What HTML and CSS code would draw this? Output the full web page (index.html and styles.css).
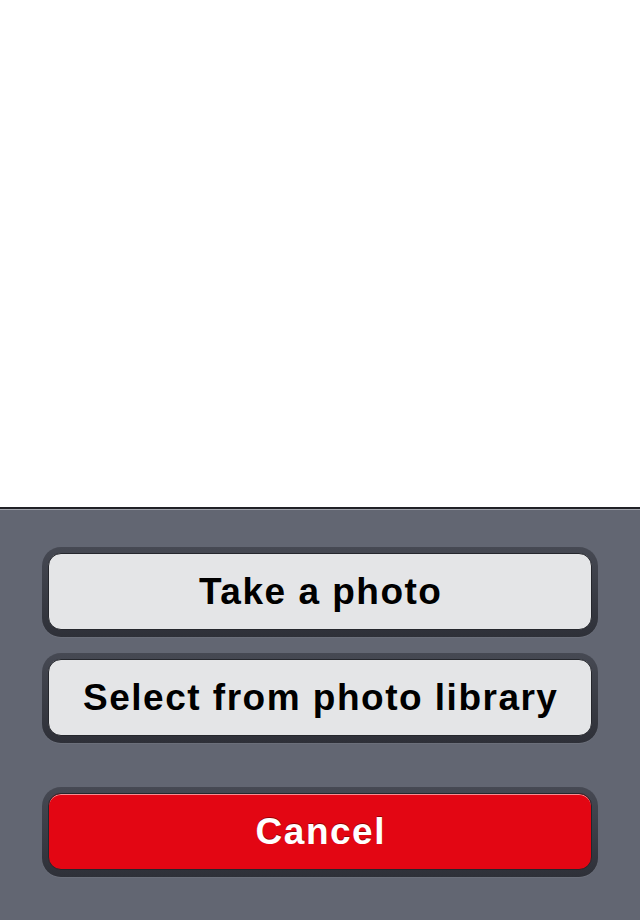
FILE: index.html
```html
<!DOCTYPE html>
<html>
<head>
<meta charset="utf-8">
<link rel="stylesheet" href="styles.css">
</head>
<body>
<div class="screen">
  <div class="content"></div>
  <div class="sheet">
    <div class="well">
      <button class="btn">Take a photo</button>
    </div>
    <div class="well">
      <button class="btn">Select from photo library</button>
    </div>
    <div class="well well-cancel">
      <button class="btn btn-cancel">Cancel</button>
    </div>
  </div>
</div>
</body>
</html>
```
FILE: styles.css
```css
html, body {
  margin: 0;
  padding: 0;
  background: #ffffff;
}
.screen {
  width: 640px;
  height: 920px;
  display: flex;
  flex-direction: column;
  overflow: hidden;
}
.content {
  height: 507px;
  background: #ffffff;
  flex: none;
}
.sheet {
  flex: 1;
  background: #626672;
  border-top: 2px solid #202126;
  box-shadow: inset 0 1px 0 #a0a3ab;
  padding: 38px 42px 0 42px;
  display: flex;
  flex-direction: column;
  gap: 16px;
}
.well {
  height: 90px;
  box-sizing: border-box;
  padding: 6px 6px 7px 6px;
  border-radius: 19px;
  background: linear-gradient(#464953, #2e3038);
  box-shadow: 0 1px 0 rgba(255,255,255,0.06);
}
.well-cancel {
  margin-top: 28px;
}
.btn {
  display: block;
  width: 100%;
  height: 100%;
  margin: 0;
  border: 1px solid #25272d;
  border-radius: 13px;
  background: #e4e5e7;
  font-family: "Liberation Sans", Arial, sans-serif;
  font-weight: bold;
  font-size: 37px;
  letter-spacing: 1.5px;
  text-indent: 1.5px;
  color: #000000;
  padding: 0;
  box-sizing: border-box;
  cursor: pointer;
}
.btn-cancel {
  background: #e30613;
  color: #ffffff;
  box-shadow: inset 0 1px 0 rgba(255,200,200,0.7);
  text-shadow: 0 -1px 0 rgba(90,0,0,0.6);
}
```
